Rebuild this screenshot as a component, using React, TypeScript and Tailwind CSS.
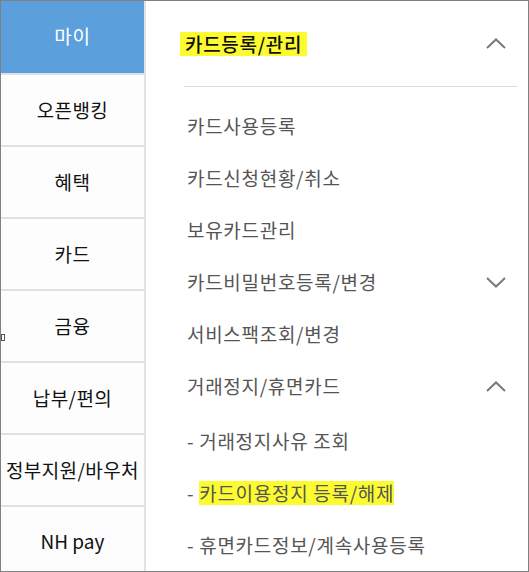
import React from "react";

const font = { fontFamily: '"Noto Sans CJK KR", "Noto Sans", sans-serif' };

function Chevron({ up }: { up: boolean }) {
  return (
    <svg width="20" height="11" viewBox="0 0 20 11" className="mr-[11px]">
      <polyline
        points={up ? "1,10 10,1.5 19,10" : "1,1 10,9.5 19,1"}
        fill="none"
        stroke="#7a7a7a"
        strokeWidth="2"
      />
    </svg>
  );
}

const leftItems = ["오픈뱅킹", "혜택", "카드", "금융", "납부/편의", "정부지원/바우처"];

export default function App() {
  return (
    <div
      className="relative w-[529px] h-[572px] border border-[#808080] flex bg-white overflow-hidden"
      style={font}
    >
      <div className="absolute left-0 top-[333px] w-[4px] h-[7px] border border-[#555] bg-white" />
      <div className="w-[145px] flex flex-col border-r-2 border-[#e2e2e2] bg-[#fdfdfd]">
        <div className="h-[72px] shrink-0 bg-[#5b9fdc] flex items-center justify-center text-white text-[19px] tracking-[0.7px] pb-[2px]">
          마이
        </div>
        {leftItems.map((t) => (
          <div
            key={t}
            className="h-[72px] shrink-0 border-t-2 border-[#e0e0e0] flex items-center justify-center text-[#111] text-[19px] tracking-[0.4px] whitespace-nowrap"
          >
            {t}
          </div>
        ))}
        <div className="flex-1 border-t-2 border-[#e0e0e0] flex items-center justify-center text-[#111] text-[19px] pt-[4px]">
          NH pay
        </div>
      </div>
      <div className="flex-1 flex flex-col pl-[38px] pr-[11px]">
        <div className="h-[85px] shrink-0 flex items-center justify-between">
          <span className="bg-[#fbfb30] text-[#111] text-[19px] tracking-[0.7px] font-medium px-[5px] leading-[24px] -ml-[4px]">
            카드등록/관리
          </span>
          <Chevron up />
        </div>
        <div className="h-px bg-[#dcdcdc]" />
        <div className="mt-[13px] flex flex-col text-[19px] tracking-[0.7px] text-[#555]">
          {[
            ["카드사용등록", null],
            ["카드신청현황/취소", null],
            ["보유카드관리", null],
            ["카드비밀번호등록/변경", "down"],
            ["서비스팩조회/변경", null],
            ["거래정지/휴면카드", "up"],
          ].map(([t, c]) => (
            <div key={t as string} className="h-[52px] flex items-center justify-between pl-[3px]">
              <span>{t}</span>
              {c && <Chevron up={c === "up"} />}
            </div>
          ))}
          <div className="mt-[3px] h-[52px] flex items-center pl-[3px]">- 거래정지사유 조회</div>
          <div className="h-[52px] flex items-center pl-[3px]">
            -&nbsp;
            <span className="bg-[#fbfb30] leading-[24px]">카드이용정지 등록/해제</span>
          </div>
          <div className="h-[52px] flex items-center pl-[3px]">- 휴면카드정보/계속사용등록</div>
        </div>
      </div>
    </div>
  );
}
